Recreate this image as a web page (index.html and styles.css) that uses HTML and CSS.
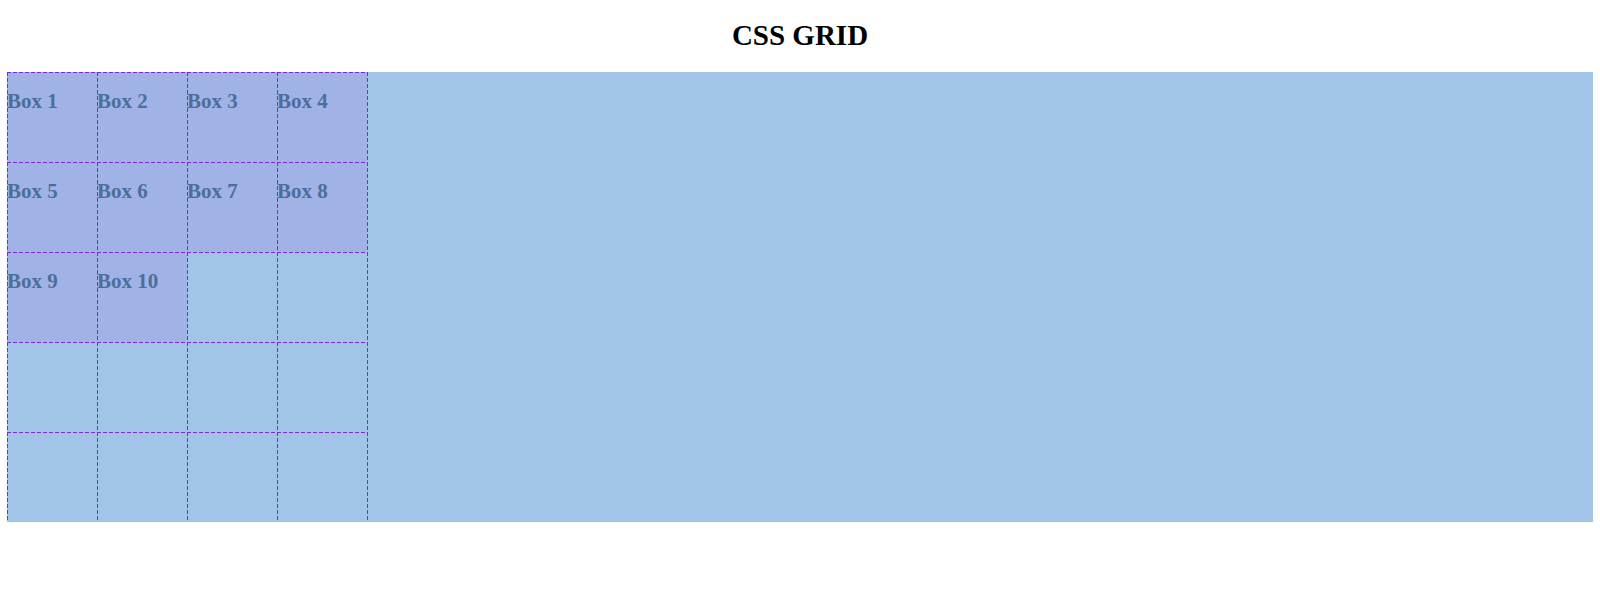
FILE: index.html
```html
<!DOCTYPE html>
<html>
<head>
<meta charset="utf-8">
<link rel="stylesheet" href="styles.css">
</head>
<body>
<h1 class="title">CSS GRID</h1>
<div class="container">
  <div class="grid">
    <div class="box">Box 1</div>
    <div class="box">Box 2</div>
    <div class="box">Box 3</div>
    <div class="box">Box 4</div>
    <div class="box">Box 5</div>
    <div class="box">Box 6</div>
    <div class="box">Box 7</div>
    <div class="box">Box 8</div>
    <div class="box">Box 9</div>
    <div class="box">Box 10</div>
  </div>
  <div class="overlay">
    <div class="cell"></div><div class="cell"></div><div class="cell"></div><div class="cell"></div>
    <div class="cell"></div><div class="cell"></div><div class="cell"></div><div class="cell"></div>
    <div class="cell"></div><div class="cell"></div><div class="cell"></div><div class="cell"></div>
    <div class="cell"></div><div class="cell"></div><div class="cell"></div><div class="cell"></div>
    <div class="cell"></div><div class="cell"></div><div class="cell"></div><div class="cell"></div>
  </div>
</div>
</body>
</html>
```
FILE: styles.css
```css
body {
  margin: 0;
  padding: 0 7px;
  font-family: "Liberation Serif", "Times New Roman", serif;
  background: #ffffff;
}
.title {
  margin: 0 0 21px;
  padding-top: 19px;
  font-size: 29px;
  font-weight: bold;
  line-height: 32px;
  text-align: center;
  color: #000;
}
.container {
  position: relative;
  height: 450px;
  background: #a1c4e8;
}
.grid {
  display: grid;
  grid-template-columns: repeat(4, 90px);
  grid-template-rows: repeat(5, 90px);
}
.box {
  background: #a0b2e6;
  color: #4b6f9a;
  font-weight: bold;
  font-size: 21px;
  padding-top: 17px;
  line-height: normal;
}
.overlay {
  position: absolute;
  top: 0;
  left: 0;
  width: 361px;
  height: 451px;
  display: grid;
  grid-template-columns: repeat(4, 90px);
  grid-template-rows: repeat(5, 90px);
  pointer-events: none;
  background:
    repeating-linear-gradient(to right, #8027dc 0 4px, transparent 4px 6px) left bottom / 100% 1px no-repeat,
    repeating-linear-gradient(to bottom, #8027dc 0 4px, transparent 4px 6px) right top / 1px 100% no-repeat;
}
.cell {
  background:
    repeating-linear-gradient(to right, #8027dc 0 4px, transparent 4px 6px) left top / 100% 1px no-repeat,
    repeating-linear-gradient(to bottom, #8027dc 0 4px, transparent 4px 6px) left top / 1px 100% no-repeat;
}
```
